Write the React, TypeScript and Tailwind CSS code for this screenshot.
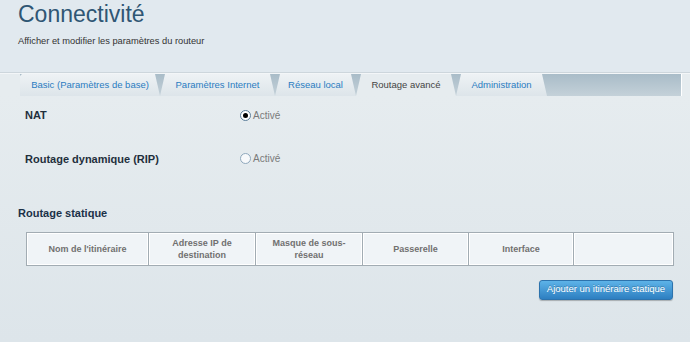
import React from 'react';

const tabs = [
  { label: 'Basic (Paramètres de base)', width: 'w-[140px]', first: true },
  { label: 'Paramètres Internet', width: 'w-[115px]' },
  { label: 'Réseau local', width: 'w-[81px]' },
  { label: 'Routage avancé', width: 'w-[100px]', active: true },
  { label: 'Administration', width: 'w-[91px]' },
];

const columns = [
  { label: "Nom de l'itinéraire", width: 'w-[122px]' },
  { label: 'Adresse IP de destination', width: 'w-[107px]' },
  { label: 'Masque de sous-réseau', width: 'w-[107px]' },
  { label: 'Passerelle', width: 'w-[106px]' },
  { label: 'Interface', width: 'w-[105px]' },
  { label: '', width: 'flex-1' },
];

function Radio({ checked }: { checked?: boolean }) {
  return (
    <span
      className={`flex h-[11px] w-[11px] items-center justify-center rounded-full border ${
        checked ? 'border-[#5a7d99] bg-white' : 'border-[#8fa8bc] bg-[#f7f9fb]'
      }`}
    >
      {checked && <span className="h-[5px] w-[5px] rounded-full bg-black" />}
    </span>
  );
}

function Setting({ label, checked }: { label: string; checked?: boolean }) {
  return (
    <div className="flex items-center">
      <span className="w-[215px] text-[11px] font-bold text-[#1f2f3c]">{label}</span>
      <label className="flex items-center gap-[2px] text-[10px] text-[#7a7a7a]">
        <Radio checked={checked} />
        Activé
      </label>
    </div>
  );
}

export default function App() {
  return (
    <div className="h-[342px] w-[690px] overflow-hidden bg-[#e1e9ef] font-['Liberation_Sans',Arial,sans-serif]">
      <header className="h-[72px] px-[18px]">
        <h1 className="text-[23px] leading-[28px] text-[#2f5674]">Connectivité</h1>
        <p className="mt-[7px] text-[9.3px] leading-[12px] text-[#333]">
          Afficher et modifier les paramètres du routeur
        </p>
      </header>
      <div className="h-px bg-[#cdd6dc]" />
      <div className="h-px bg-[#f3f6f8]" />

      <nav className="flex h-[22px] bg-[#e6ecef]">
        <div className="ml-[20px] flex w-[661px] bg-gradient-to-b from-[#a9bcc8] to-[#c4d1d9]">
          {tabs.map((tab) => (
            <div
              key={tab.label}
              className={`flex ${tab.width} items-center justify-center pt-[1px] text-[9.5px] ${
                tab.first
                  ? '[clip-path:polygon(0_100%,0_2px,2px_0,calc(100%_-_5px)_0,100%_100%)]'
                  : '[clip-path:polygon(0_100%,5px_0,calc(100%_-_5px)_0,100%_100%)]'
              } ${
                tab.active
                  ? 'bg-[#e6ecef] text-[#444]'
                  : 'bg-gradient-to-b from-[#eef2f5] to-[#dde5ea] text-[#2a7cc1]'
              }`}
            >
              {tab.label}
            </div>
          ))}
        </div>
        <div className="w-px bg-white" />
      </nav>

      <main className="h-[246px] bg-gradient-to-b from-[#e6ecef] to-[#dde5ea] pt-[11px]">
        <div className="flex flex-col gap-[27px] pl-[25px]">
          <Setting label="NAT" checked />
          <Setting label="Routage dynamique (RIP)" />
        </div>

        <h2 className="mt-[38px] pl-[18px] text-[11px] font-bold text-[#1b3148]">Routage statique</h2>

        <div className="ml-[26px] mt-[10px] flex h-[34px] w-[648px] border border-[#a2acb3] bg-[#f0f4f7]">
          {columns.map((col, i) => (
            <div
              key={i}
              className={`${col.width} flex items-center justify-center px-2 text-center text-[9px] font-bold leading-[12px] text-[#707070] ${
                i < columns.length - 1 ? 'border-r border-r-[#a2acb3]' : ''
              } shadow-[inset_1px_1px_0_#fff,inset_-1px_-1px_0_#fff]`}
            >
              {col.label}
            </div>
          ))}
        </div>

        <div className="mt-[14px] flex justify-end pr-[17px]">
          <button className="h-[20px] w-[134px] rounded-[3px] border border-[#2d73ad] bg-gradient-to-b from-[#5db3e8] to-[#2d7fc1] text-[9.5px] text-white shadow-[0_1px_1px_rgba(0,0,0,0.25)] [text-shadow:0_-1px_0_rgba(0,0,0,0.25)]">
            Ajouter un itinéraire statique
          </button>
        </div>
      </main>
    </div>
  );
}
